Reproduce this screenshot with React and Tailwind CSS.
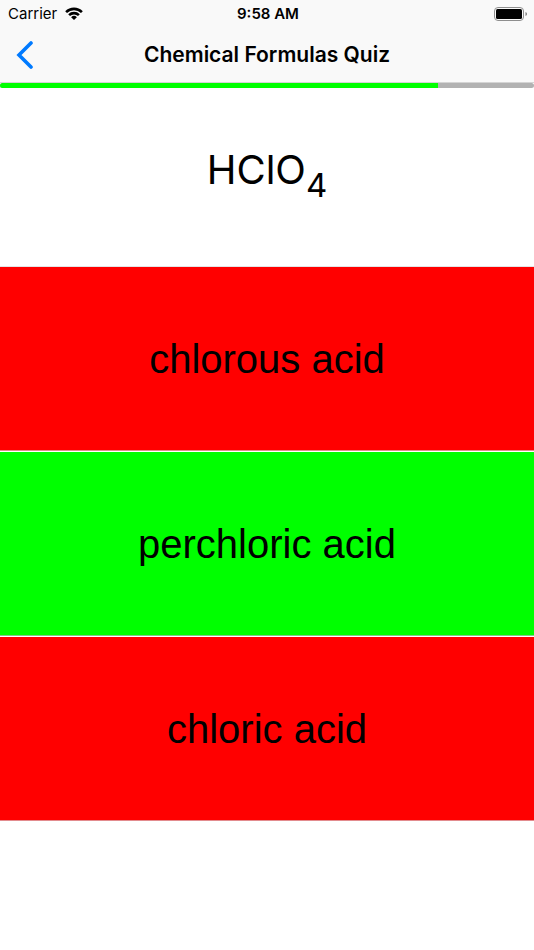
import React, { useState } from 'react';

const answers = [
  { name: 'chlorous acid', correct: false },
  { name: 'perchloric acid', correct: true },
  { name: 'chloric acid', correct: false },
];

const WifiIcon = () => (
  <svg width="18" height="14" viewBox="0 0 18 14" aria-hidden="true">
    <path d="M0.2 4.2 A12.6 12.6 0 0 1 17.8 4.2 L16 6 A10 10 0 0 0 2 6 Z" />
    <path d="M3.2 7.2 A8.3 8.3 0 0 1 14.8 7.2 L13 9 A5.8 5.8 0 0 0 5 9 Z" />
    <path d="M6.1 10.2 A4.1 4.1 0 0 1 11.9 10.2 L9 13.1 Z" />
  </svg>
);

const BatteryIcon = () => (
  <svg width="34" height="14" viewBox="0 0 34 14" aria-hidden="true">
    <rect x="0.5" y="0.5" width="29" height="13" rx="3.5" fill="none" stroke="#8e8e8e" />
    <rect x="2" y="2" width="26" height="10" rx="1.5" />
    <path d="M31.5 5 Q33 5.6 33 7 Q33 8.4 31.5 9 Z" fill="#777777" />
  </svg>
);

const App = () => {
  const [selected, setSelected] = useState(null);

  return (
    <div className="min-h-screen bg-white text-black font-['Inter','Liberation_Sans',sans-serif]">
      <header className="bg-[#f9f9f9] border-b border-[#d4d4d4]">
        <div className="grid grid-cols-[1fr_auto_1fr] items-center h-7 pl-2 pr-1.5 text-[15px] leading-5">
          <div className="flex items-center gap-2">
            <span>Carrier</span>
            <WifiIcon />
          </div>
          <span className="font-semibold">9:58 AM</span>
          <div className="flex justify-end">
            <BatteryIcon />
          </div>
        </div>
        <div className="grid grid-cols-[48px_1fr_48px] items-center h-[54px]">
          <button type="button" aria-label="Back" className="flex pl-4">
            <svg width="18" height="28" viewBox="0 0 18 28" fill="none" stroke="#007aff" strokeWidth="3.6" strokeLinecap="round" strokeLinejoin="miter" aria-hidden="true">
              <path d="M15 2 L3 14 L15 26" />
            </svg>
          </button>
          <h1 className="text-center text-[21px] leading-7 font-semibold">Chemical Formulas Quiz</h1>
        </div>
      </header>

      <div role="progressbar" aria-label="Quiz progress" aria-valuenow={82} className="h-[5px] rounded-sm overflow-hidden bg-[#b2b2b2]">
        <div className="h-full bg-[#00ff00]" style={{ width: '82%' }} />
      </div>

      <main>
        <p className="h-[179px] pt-[57px] text-center text-[40px] leading-[50px] border-b border-[#e4e4e6]">
          HClO<sub className="text-[33px] -bottom-[13px]">4</sub>
        </p>
        <div className="flex flex-col gap-px font-['Liberation_Sans',sans-serif]">
          {answers.map((answer) => (
            <button
              key={answer.name}
              type="button"
              aria-pressed={selected === answer.name}
              onClick={() => setSelected(answer.name)}
              className={`h-[184px] w-full text-[40px] leading-[50px] border-b ${answer.correct ? 'bg-[#00ff00] border-[#83c888]' : 'bg-[#ff0000] border-[#e28b8e]'}`}
            >
              {answer.name}
            </button>
          ))}
        </div>
      </main>
    </div>
  );
};

export default App;
